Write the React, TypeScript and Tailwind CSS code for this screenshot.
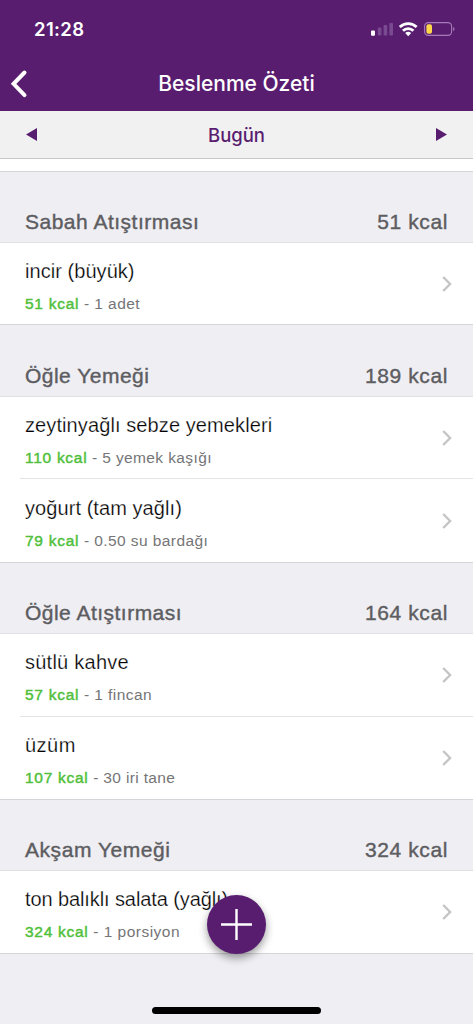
type Item = { name: string; kcal: string; amount: string; height: string; nameSpacing: string; amountSpacing: string };
type Meal = { title: string; total: string; headerHeight: string; spacing: string; items: Item[] };

const meals: Meal[] = [
  {
    title: 'Sabah Atıştırması', total: '51 kcal', headerHeight: 'h-[72px] pt-[37px]', spacing: 'tracking-[0.5px]',
    items: [{ name: 'incir (büyük)', kcal: '51 kcal', amount: '1 adet', height: 'h-[81px] pt-[16px]', nameSpacing: 'tracking-[0.05px]', amountSpacing: 'tracking-[0.45px]' }],
  },
  {
    title: 'Öğle Yemeği', total: '189 kcal', headerHeight: 'h-[73px] pt-[38px]', spacing: 'tracking-[0.48px]',
    items: [
      { name: 'zeytinyağlı sebze yemekleri', kcal: '110 kcal', amount: '5 yemek kaşığı', height: 'h-[82px] pt-[16px]', nameSpacing: 'tracking-[0.1px]', amountSpacing: 'tracking-[0.38px]' },
      { name: 'yoğurt (tam yağlı)', kcal: '79 kcal', amount: '0.50 su bardağı', height: 'h-[83px] pt-[17px]', nameSpacing: 'tracking-[0.07px]', amountSpacing: 'tracking-[0.42px]' },
    ],
  },
  {
    title: 'Öğle Atıştırması', total: '164 kcal', headerHeight: 'h-[72px] pt-[37px]', spacing: 'tracking-[0.48px]',
    items: [
      { name: 'sütlü kahve', kcal: '57 kcal', amount: '1 fincan', height: 'h-[83px] pt-[16px]', nameSpacing: 'tracking-[0.25px]', amountSpacing: 'tracking-[0.45px]' },
      { name: 'üzüm', kcal: '107 kcal', amount: '30 iri tane', height: 'h-[82px] pt-[16px]', nameSpacing: 'tracking-[0.5px]', amountSpacing: 'tracking-[0.35px]' },
    ],
  },
  {
    title: 'Akşam Yemeği', total: '324 kcal', headerHeight: 'h-[72px] pt-[37px]', spacing: 'tracking-[0.55px]',
    items: [{ name: 'ton balıklı salata (yağlı)', kcal: '324 kcal', amount: '1 porsiyon', height: 'h-[82px] pt-[16px]', nameSpacing: 'tracking-[-0.1px]', amountSpacing: 'tracking-[0.48px]' }],
  },
];

function StatusIcons() {
  return (
    <svg width="86" height="18" viewBox="0 0 86 18" fill="none">
      <rect x="1" y="10.5" width="4" height="5.2" rx="1" fill="#fff" />
      <g fill="#7a4a91">
        <rect x="7.8" y="7.5" width="3.6" height="8" rx="1" />
        <rect x="13.6" y="5" width="3.6" height="10.5" rx="1" />
        <rect x="19.4" y="3" width="3.6" height="12.5" rx="1" />
      </g>
      <g stroke="#fff" strokeWidth="2.8">
        <path d="M29.8 7.1a12 12 0 0 1 16.8 0" />
        <path d="M33 10.7a7.4 7.4 0 0 1 10.4 0" />
      </g>
      <path d="M35.2 13.1a4.4 4.4 0 0 1 6 0l-3 3.1z" fill="#fff" />
      <rect x="54.6" y="2.6" width="27" height="12.8" rx="3.6" stroke="#a67bb8" strokeWidth="1.1" />
      <rect x="56.4" y="4.3" width="5.6" height="9.5" rx="2" fill="#ffd84a" />
      <path d="M83.2 7v4.2c1.8-.7 1.8-3.5 0-4.2z" fill="#a67bb8" />
    </svg>
  );
}

function Chevron() {
  return (
    <svg className="mb-px shrink-0" width="12" height="18" viewBox="0 0 12 18" fill="none" stroke="#c5c5c8" strokeWidth="2.4">
      <path d="M2.2 2l6.9 7-6.9 7" />
    </svg>
  );
}

function Row({ item, last }: { item: Item; last: boolean }) {
  return (
    <div className={`${item.height} flex bg-white pl-[20px]`}>
      <div className={`flex flex-1 justify-between pl-[5px] pr-[20px] ${last ? '' : 'border-b border-[#e4e4e6]'}`}>
        <div className="flex flex-col">
          <span className={`h-[24px] whitespace-nowrap text-[20px] leading-[24px] text-black [-webkit-text-stroke:0.25px_#fff] ${item.nameSpacing}`}>{item.name}</span>
          <span className={`mt-[11px] h-[20px] whitespace-nowrap text-[15.5px] leading-[20px] text-[#757577] ${item.amountSpacing}`}>
            <span className="tracking-[0.72px] text-[#50bf3b] [-webkit-text-stroke:0.45px_#50bf3b]">{item.kcal}</span> - {item.amount}
          </span>
        </div>
        <div className="h-[50px] pt-[16px]"><Chevron /></div>
      </div>
    </div>
  );
}

export default function App() {
  return (
    <div className="relative flex h-[1024px] w-[473px] flex-col overflow-hidden bg-[#efeef3] font-['Liberation_Sans',Arial,sans-serif]">
      <header className="h-[111px] shrink-0 bg-[#591d70] font-[Inter,sans-serif] text-white">
        <div className="flex h-[58px] items-center justify-between pl-[34px] pr-[17px]">
          <span className="pt-px text-[18.5px] font-semibold tracking-[0.35px]">21:28</span>
          <StatusIcons />
        </div>
        <div className="grid h-[52px] grid-cols-[40px_1fr_40px] items-center">
          <svg className="ml-[9px]" width="20" height="30" viewBox="0 0 20 30" fill="none" stroke="#fff" strokeWidth="4" strokeLinecap="round" strokeLinejoin="miter">
            <path d="M15.5 3.5L4.6 14.8l10.9 11.3" />
          </svg>
          <h1 className="whitespace-nowrap text-center text-[21px] font-medium">Beslenme Özeti</h1>
        </div>
      </header>
      <nav className="flex h-[48px] shrink-0 items-center justify-between border-b border-[#c8c8ca] bg-[#f1f1f2] px-[26px] font-[Inter,sans-serif] text-[#591d70]">
        <svg width="11" height="13" viewBox="0 0 11 13" fill="currentColor"><path d="M11 0v13L0 6.5z" /></svg>
        <span className="pt-[2px] text-[18.5px] font-medium">Bugün</span>
        <svg width="11" height="13" viewBox="0 0 11 13" fill="currentColor"><path d="M0 0v13l11-6.5z" /></svg>
      </nav>
      <div className="h-[12px] shrink-0 bg-white" />
      <main className="shrink-0 border-b border-[#d5d5d9]">
        {meals.map((meal) => (
          <section key={meal.title}>
            <div className={`${meal.headerHeight} flex items-start justify-between border-y border-t-[#d5d5d9] border-b-[#e0e0e4] pl-[25px] pr-[25px] text-[21px] leading-[26px] text-[#5d5d61] [-webkit-text-stroke:0.4px_#5d5d61]`}>
              <h2 className={`whitespace-nowrap ${meal.spacing}`}>{meal.title}</h2>
              <span className="tracking-[0.6px]">{meal.total}</span>
            </div>
            {meal.items.map((item, i) => (
              <Row key={item.name} item={item} last={i === meal.items.length - 1} />
            ))}
          </section>
        ))}
      </main>
      <button aria-label="Ekle" className="absolute left-[207px] top-[895px] flex size-[59px] items-center justify-center rounded-full bg-[#591d70] shadow-[0_4px_9px_rgba(0,0,0,0.4)]">
        <svg width="31" height="31" viewBox="0 0 31 31" stroke="#fff" strokeWidth="2.4"><path d="M15.5 0v31M0 15.5h31" /></svg>
      </button>
      <div className="absolute left-[152px] top-[1007px] h-[7px] w-[169px] rounded-full bg-black" />
    </div>
  );
}
